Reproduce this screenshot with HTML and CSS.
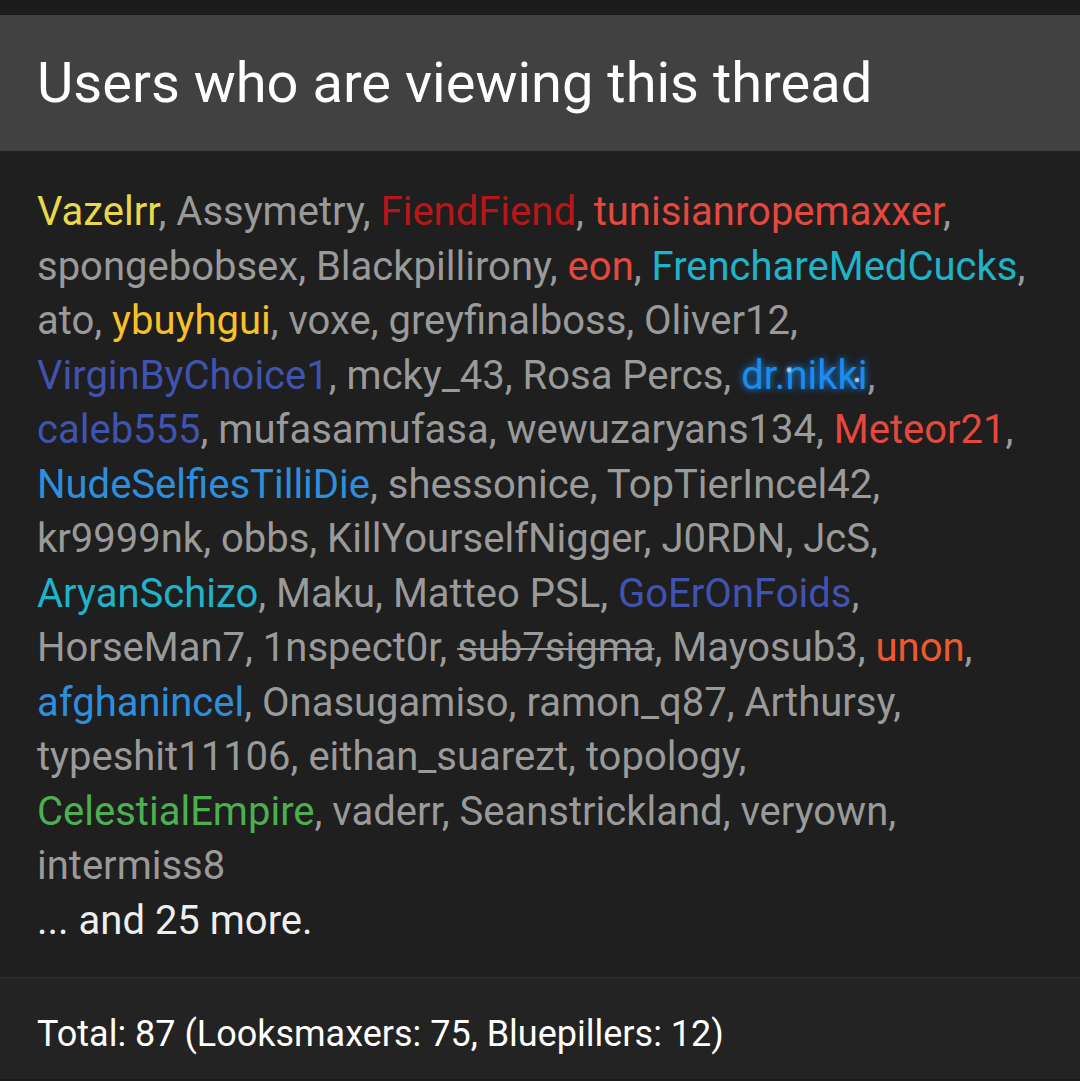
FILE: index.html
```html
<!DOCTYPE html>
<html>
<head>
<meta charset="utf-8">
<title>Users who are viewing this thread</title>
<link rel="stylesheet" href="styles.css">
</head>
<body>
<div class="page">
  <section class="block">
    <h3 class="block-header">Users who are viewing this thread</h3>
    <div class="block-body">
      <div class="user-list">
        <span class="u c-yellow">Vazelrr</span>, <span class="u">Assymetry</span>, <span class="u c-darkred">FiendFiend</span>, <span class="u c-red">tunisianropemaxxer</span>,<br>
        <span class="u">spongebobsex</span>, <span class="u">Blackpillirony</span>, <span class="u c-red">eon</span>, <span class="u c-cyan">FrenchareMedCucks</span>,<br>
        <span class="u">ato</span>, <span class="u c-amber">ybuyhgui</span>, <span class="u">voxe</span>, <span class="u">greyfinalboss</span>, <span class="u">Oliver12</span>,<br>
        <span class="u c-indigo">VirginByChoice1</span>, <span class="u">mcky_43</span>, <span class="u">Rosa Percs</span>, <span class="u c-glow">dr.nikki</span>,<br>
        <span class="u c-indigo">caleb555</span>, <span class="u">mufasamufasa</span>, <span class="u">wewuzaryans134</span>, <span class="u c-red">Meteor21</span>,<br>
        <span class="u c-blue">NudeSelfiesTilliDie</span>, <span class="u">shessonice</span>, <span class="u">TopTierIncel42</span>,<br>
        <span class="u">kr9999nk</span>, <span class="u">obbs</span>, <span class="u">KillYourselfNigger</span>, <span class="u">J0RDN</span>, <span class="u">JcS</span>,<br>
        <span class="u c-cyan">AryanSchizo</span>, <span class="u">Maku</span>, <span class="u">Matteo PSL</span>, <span class="u c-indigo">GoErOnFoids</span>,<br>
        <span class="u">HorseMan7</span>, <span class="u">1nspect0r</span>, <span class="u banned">sub7sigma</span>, <span class="u">Mayosub3</span>, <span class="u c-orange">unon</span>,<br>
        <span class="u c-blue">afghanincel</span>, <span class="u">Onasugamiso</span>, <span class="u">ramon_q87</span>, <span class="u">Arthursy</span>,<br>
        <span class="u">typeshit11106</span>, <span class="u">eithan_suarezt</span>, <span class="u">topology</span>,<br>
        <span class="u c-green">CelestialEmpire</span>, <span class="u">vaderr</span>, <span class="u">Seanstrickland</span>, <span class="u">veryown</span>,<br>
        <span class="u">intermiss8</span>
      </div>
      <div class="more">... and 25 more.</div>
    </div>
    <div class="block-footer">Total: 87 (Looksmaxers: 75, Bluepillers: 12)</div>
  </section>
</div>
</body>
</html>
```
FILE: styles.css
```css
html, body {
  margin: 0;
  padding: 0;
  background: #1c1c1c;
}
body {
  font-family: Roboto, "Noto Sans", sans-serif;
  -webkit-font-smoothing: antialiased;
}
.page {
  padding-top: 15px;
}
.block {
  background: #1f1f1f;
}
.block-header {
  margin: 0;
  background: #414141;
  color: #ffffff;
  font-weight: 400;
  font-size: 56px;
  line-height: 56px;
  padding: 40px 36px 40px 37px;
}
.block-body {
  padding: 34px 36px 29px 37px;
  font-size: 40px;
  line-height: 54.5px;
  color: #9a9a9a;
  border-bottom: 2px solid #2a2a2a;
}
.user-list {
  color: #9a9a9a;
  white-space: nowrap;
}
.u { color: #9a9a9a; }
.c-yellow { color: #e9d84a; }
.c-darkred { color: #b8171a; }
.c-red { color: #e5483d; }
.c-cyan { color: #1fb3c9; }
.c-amber { color: #f8c12a; }
.c-indigo { color: #4153b0; }
.c-blue { color: #2e8ede; }
.c-orange { color: #ec5a2d; }
.c-green { color: #4caf50; }
.c-glow {
  color: #1a8cf0;
  text-shadow: 0 0 6px rgba(26, 140, 240, 0.8), 0 0 12px rgba(26, 140, 240, 0.4);
  position: relative;
}
.c-glow::before,
.c-glow::after {
  content: "";
  position: absolute;
  width: 4px;
  height: 4px;
  border-radius: 50%;
  background: #a9c9ea;
  box-shadow: 0 0 3px #cfe4fa;
}
.c-glow::before { left: 46px; top: 16px; }
.c-glow::after { left: 114px; top: 26px; }
.banned {
  text-decoration: line-through;
  text-decoration-thickness: 2px;
}
.more {
  color: #eeeeee;
}
.block-footer {
  background: #232323;
  color: #ffffff;
  font-size: 36px;
  line-height: 36px;
  padding: 37px 36px 27px 37px;
}
```
